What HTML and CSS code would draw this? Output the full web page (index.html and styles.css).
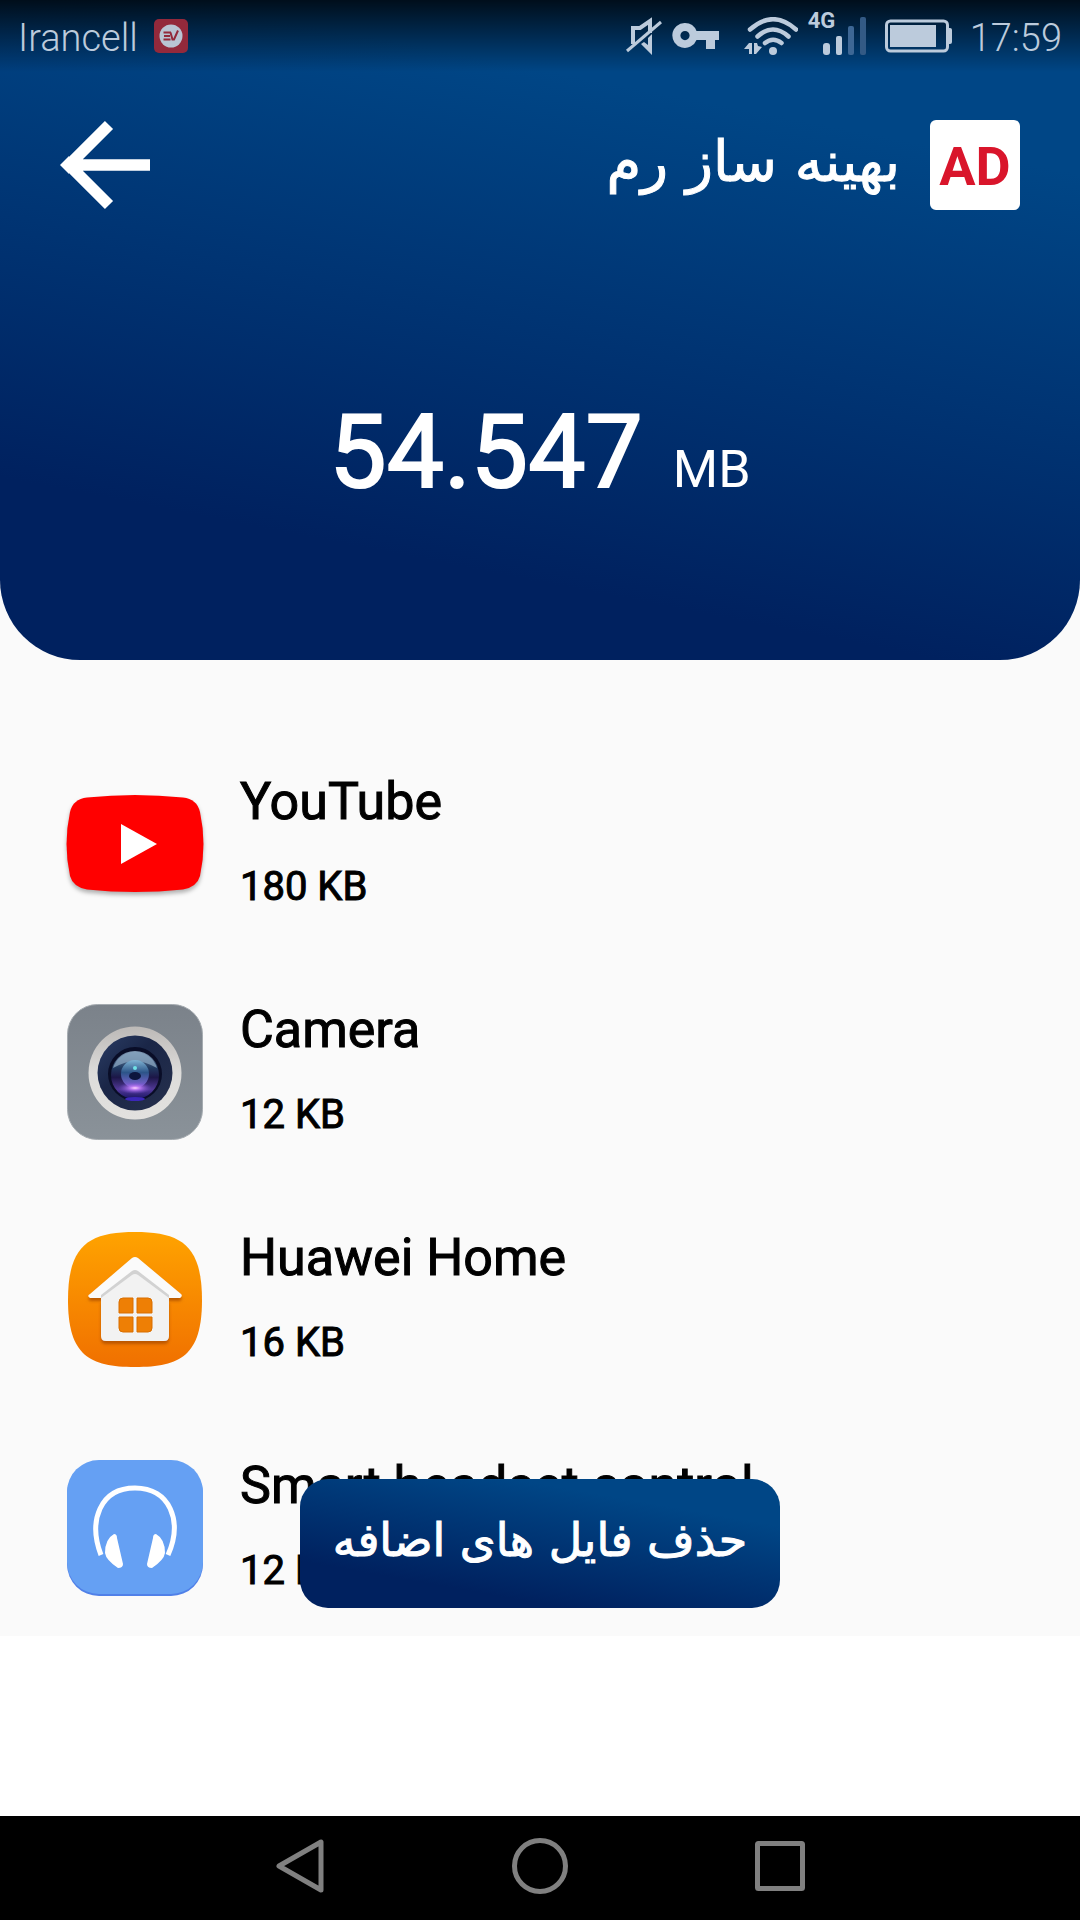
FILE: index.html
```html
<!DOCTYPE html>
<html lang="fa">
<head>
<meta charset="utf-8">
<meta name="viewport" content="width=device-width, initial-scale=1">
<title>بهینه ساز رم</title>
<link rel="stylesheet" href="styles.css">
</head>
<body>
<div class="screen">
  <header class="hero">
    <div class="status">
      <div class="status-side">
        <span class="carrier">Irancell</span>
        <svg class="vpn-badge" width="34" height="34" viewBox="0 0 34 34" aria-hidden="true">
          <rect width="34" height="34" rx="5" fill="#93293b"/>
          <circle cx="17" cy="17" r="11.500" fill="#b9c4d3"/>
          <path d="M9.500 13.500H17M10 17h6M9.500 20.500h7M16.500 13.500l2 7h1.500l4-9" fill="none" stroke="#93293b" stroke-width="2"/>
        </svg>
      </div>
      <div class="status-side">
        <svg width="36" height="38" viewBox="0 0 36 38" aria-hidden="true" fill="none" stroke="#bccbdc" stroke-width="4">
          <path d="M7 27V11h7L24 4v12"/>
          <path d="M1 34L35 5" stroke-width="3"/>
          <path d="M15 27l11 11V17l-4 4v7l-4-3z" fill="#bccbdc" stroke="none"/>
        </svg>
        <svg class="key" width="48" height="26" viewBox="0 0 48 26" aria-hidden="true" fill="#bccbdc">
          <path fill-rule="evenodd" d="M13 0a12.500 12.500 0 1 0 11.500 17H34v9h9v-9h4V8H24.500A12.500 12.500 0 0 0 13 0zm0 8a4.600 4.600 0 1 1 0 9.200A4.600 4.600 0 0 1 13 8z"/>
        </svg>
        <svg class="wifi" width="54" height="38" viewBox="0 0 54 38" aria-hidden="true" fill="none" stroke="#bccbdc" stroke-width="4.500" stroke-linecap="round">
          <path d="M6 12.500Q29-8 52 12.500M13.500 19.500Q29 5.500 44.500 19.500M21 26Q29 19.500 37.500 26"/>
          <circle cx="29" cy="34" r="4" fill="#bccbdc" stroke="none"/>
          <path d="M0 32l5-6h3v11H5v-5zM10 26v11h2l6-7-4-1-1-3z" fill="#bccbdc" stroke="none"/>
        </svg>
        <div class="signal">
          <span class="network">4G</span>
          <svg width="44" height="38" viewBox="0 0 44 38" aria-hidden="true" fill="#bccbdc">
            <rect x="0" y="26" width="7" height="12" rx="3"/>
            <rect x="13" y="19" width="6" height="19" rx="2"/>
            <rect x="25" y="9" width="6" height="29" rx="2" fill="#3d6795"/>
            <rect x="37" y="0" width="6" height="38" rx="2" fill="#335a85"/>
          </svg>
        </div>
        <svg class="battery" width="67" height="34" viewBox="0 0 67 34" aria-hidden="true">
          <rect x="1.500" y="2" width="61" height="30" rx="4" fill="none" stroke="#bccbdc" stroke-width="3"/>
          <rect x="5" y="6" width="46" height="22" fill="#bccbdc"/>
          <path d="M63 9h2q2 0 2 2v12q0 2-2 2h-2z" fill="#bccbdc"/>
        </svg>
        <time class="clock">17:59</time>
      </div>
    </div>

    <div class="toolbar">
      <button class="icon-button" type="button" aria-label="بازگشت">
        <svg width="90" height="90" viewBox="0 0 90 90" aria-hidden="true" fill="none" stroke="#fff" stroke-width="11.500">
          <path d="M90 45H12M49 5L9 45l40 40" />
          <path d="M0 45l9-9v18z" fill="#fff" stroke="none"/>
        </svg>
      </button>
      <div class="heading">
        <h1 class="title" dir="rtl">بهینه ساز رم</h1>
        <a class="ad" href="#">AD</a>
      </div>
    </div>

    <p class="total"><span class="total-value">54.547</span><span class="total-unit">MB</span></p>
  </header>

  <main class="content">
    <ul class="apps">
      <li class="app">
        <svg class="app-icon youtube" width="150" height="150" viewBox="0 0 150 150" aria-hidden="true">
          <path d="M27 28.500Q75 23.500 123 28.500Q137 30 140 43Q147 75 140 107Q137 118 123 120.500Q75 125.500 27 120.500Q13 118 10 107Q3 75 10 43Q13 30 27 28.500z" fill="#f00"/>
          <path d="M61 55l36 20-36 20z" fill="#fff"/>
        </svg>
        <div class="app-text"><h2 class="app-name">YouTube</h2><p class="app-size">180 KB</p></div>
      </li>
      <li class="app">
        <svg class="app-icon" width="150" height="150" viewBox="0 0 150 150" aria-hidden="true">
          <defs>
            <linearGradient id="body" x2="0" y2="1"><stop stop-color="#7b828a"/><stop offset="1" stop-color="#8a9299"/></linearGradient>
            <linearGradient id="ring" x2="0" y2="1"><stop stop-color="#bcb9b7"/><stop offset=".5" stop-color="#dddcda"/><stop offset="1" stop-color="#e2e1df"/></linearGradient>
            <linearGradient id="navy" x2="1" y2="1"><stop stop-color="#2b3d66"/><stop offset=".4" stop-color="#1a2647"/><stop offset="1" stop-color="#26304d"/></linearGradient>
            <linearGradient id="lens" x2="0" y2="1"><stop stop-color="#9db9d3"/><stop offset=".35" stop-color="#26456f"/><stop offset=".55" stop-color="#211950"/><stop offset=".8" stop-color="#6444b4"/><stop offset="1" stop-color="#1c1672"/></linearGradient>
            <linearGradient id="core" x2="0" y2="1"><stop stop-color="#7fb4d4"/><stop offset=".45" stop-color="#2c5488"/><stop offset="1" stop-color="#8a63dc"/></linearGradient>
            <radialGradient id="glow"><stop stop-color="#ffd4ff"/><stop offset=".3" stop-color="#b778ef"/><stop offset="1" stop-color="#6b47c8" stop-opacity="0"/></radialGradient>
          </defs>
          <rect x="7.500" y="7.500" width="135" height="135" rx="30" fill="url(#body)" stroke="#a5abb0"/>
          <circle cx="75" cy="76" r="46.500" fill="url(#ring)"/>
          <circle cx="75" cy="76" r="37.500" fill="url(#navy)"/>
          <circle cx="75" cy="77" r="27" fill="#090d27"/>
          <circle cx="75" cy="78" r="24" fill="url(#lens)" opacity=".8"/>
          <path d="M53 71a23 23 0 0 1 44 0Q84 64 75 64T53 71z" fill="#86a3be" opacity=".8"/>
          <circle cx="75" cy="77" r="14" fill="url(#core)"/>
          <ellipse cx="75" cy="79" rx="6" ry="4" fill="#0d153e"/>
          <ellipse cx="75" cy="91" rx="17" ry="6" fill="url(#glow)"/>
          <ellipse cx="75" cy="102" rx="10" ry="2" fill="#3b27b8"/>
          <circle cx="75" cy="71" r="2" fill="#70e2e6"/>
        </svg>
        <div class="app-text"><h2 class="app-name">Camera</h2><p class="app-size">12 KB</p></div>
      </li>
      <li class="app">
        <svg class="app-icon" width="150" height="150" viewBox="0 0 150 150" aria-hidden="true">
          <defs>
            <linearGradient id="orange" x2="0" y2="1"><stop stop-color="#ffa300"/><stop offset="1" stop-color="#f07000"/></linearGradient>
            <filter id="drop" x="-20%" y="-20%" width="140%" height="140%"><feDropShadow dx="0" dy="3" stdDeviation="1.500" flood-color="#a84800" flood-opacity=".75"/></filter>
          </defs>
          <path d="M75 7C121 7 142 20 142 75S121 142 75 142 8 130 8 75 29 7 75 7z" fill="url(#orange)"/>
          <path d="M41 75h68v36q0 5-5 5H46q-5 0-5-5z" fill="#f2f2f2" filter="url(#drop)"/>
          <path d="M29 72q-2-1 1-3l42-36q3-2 6 0l43 36q2 2-1 4H30z" fill="#fafafa" filter="url(#drop)"/>
          <path d="M41 76v-6l31-24q3-2 6 0l31 24v6z" fill="#d2d2d2"/>
          <path d="M41 80v-7l31-23q3-2 6 0l31 23v7z" fill="#f2f2f2"/>
          <path d="M73 73v15H59v-11q0-4 4-4zM77 73h11q4 0 4 4v11H77zM59 92h14v15H63q-4 0-4-4zM77 92h15v11q0 4-4 4H77z" fill="#ee7f05" stroke="#d96f00"/>
        </svg>
        <div class="app-text"><h2 class="app-name">Huawei Home</h2><p class="app-size">16 KB</p></div>
      </li>
      <li class="app">
        <svg class="app-icon" width="150" height="150" viewBox="0 0 150 150" aria-hidden="true">
          <rect x="7" y="9" width="136" height="134" rx="32" fill="#5080e8"/>
          <rect x="7" y="7" width="136" height="134" rx="32" fill="#65a0f3"/>
          <path d="M41 102C28 68 40 35 75 35s48 33 33 67" fill="none" stroke="#fff" stroke-width="5"/>
          <path d="M54 81q3 0 3 4l6 26q0 4-5 4Q46 107 45 100 45 86 54 81zM96 81q-3 0-3 4l-6 26q0 4 5 4 12-8 13-15Q105 86 96 81z" fill="#fff"/>
        </svg>
        <div class="app-text"><h2 class="app-name">Smart headset control</h2><p class="app-size">12 KB</p></div>
      </li>
    </ul>
    <button class="clean" type="button" dir="rtl">حذف فایل های اضافه</button>
  </main>

  <nav class="navbar">
    <button class="nav-button" type="button" aria-label="Back">
      <svg width="56" height="56" viewBox="0 0 56 56" aria-hidden="true"><path d="M49 4v48L7 28z" /></svg>
    </button>
    <button class="nav-button" type="button" aria-label="Home">
      <svg width="56" height="56" viewBox="0 0 56 56" aria-hidden="true"><circle cx="28" cy="28" r="25.500"/></svg>
    </button>
    <button class="nav-button" type="button" aria-label="Recent apps">
      <svg width="56" height="56" viewBox="0 0 56 56" aria-hidden="true"><rect x="5.500" y="5.500" width="45" height="45" rx="1"/></svg>
    </button>
  </nav>
</div>
</body>
</html>
```
FILE: styles.css
```css
* {
  box-sizing: border-box;
  margin: 0;
  padding: 0;
}

body {
  background: #fff;
  color: #000;
  font-family: Roboto, "DejaVu Sans", sans-serif;
}

button {
  border: 0;
  background: none;
  color: inherit;
  font: inherit;
  cursor: pointer;
}

svg {
  display: block;
  flex: none;
}

.screen {
  display: flex;
  flex-direction: column;
  min-height: 100vh;
  background: linear-gradient(#fafafa, #fafafa) top / 100% 800px no-repeat;
}

.hero {
  border-radius: 0 0 80px 80px;
  background: linear-gradient(191deg, #004686 20%, #00215f 79%);
  color: #fff;
  padding-bottom: 148px;
}

.status {
  display: flex;
  justify-content: space-between;
  height: 72px;
  padding: 0 18px;
  background: linear-gradient(rgba(0, 0, 0, 0.8), transparent);
  color: #bccbdc;
}

.status-side {
  display: flex;
  align-items: center;
}

.carrier,
.clock {
  padding-top: 4px;
  font-size: 38px;
  font-weight: 300;
  line-height: 68px;
}

.vpn-badge {
  margin-left: 16px;
}

.key {
  margin-left: 10px;
}

.wifi {
  margin-left: 24px;
}

.signal {
  display: flex;
  position: relative;
  margin-left: 10px;
  padding-left: 15px;
}

.network {
  position: absolute;
  top: -8px;
  left: 0;
  font-size: 22px;
  font-weight: 700;
  line-height: 24px;
}

.battery {
  margin: 0 18px;
}

.toolbar {
  display: flex;
  align-items: center;
  justify-content: space-between;
  padding: 48px 60px 0;
}

.icon-button {
  width: 90px;
  height: 90px;
}

.heading {
  display: flex;
  align-items: center;
  gap: 30px;
  height: 90px;
}

.title {
  padding-bottom: 6px;
  font-family: "DejaVu Sans", sans-serif;
  font-size: 56px;
  font-weight: 400;
  line-height: 84px;
  -webkit-text-stroke: 1px currentColor;
}

.ad {
  width: 90px;
  height: 90px;
  border-radius: 6px;
  background: #fff;
  color: #d9152b;
  font-size: 54px;
  font-weight: 700;
  line-height: 94px;
  text-align: center;
  text-decoration: none;
}

.total {
  display: flex;
  align-items: baseline;
  justify-content: center;
  gap: 30px;
  padding-top: 182px;
  line-height: 120px;
}

.total-value {
  font-size: 102px;
  -webkit-text-stroke: 2px currentColor;
}

.total-unit {
  font-size: 52px;
  line-height: 60px;
}

.content {
  position: relative;
  flex: 1;
  background: #fafafa;
}

.apps {
  display: flex;
  flex-direction: column;
  gap: 78px;
  padding: 109px 60px 33px;
  list-style: none;
}

.app {
  display: flex;
  gap: 30px;
}

.youtube {
  filter: drop-shadow(0 3px 2px rgba(0, 0, 0, 0.3));
}

.app-text {
  display: flex;
  flex-direction: column;
  gap: 28px;
}

.app-name {
  font-size: 52px;
  font-weight: 400;
  line-height: 66px;
  -webkit-text-stroke: 1px currentColor;
}

.app-size {
  font-size: 40px;
  line-height: 48px;
  -webkit-text-stroke: 1px currentColor;
}

.clean {
  position: absolute;
  bottom: 28px;
  left: 50%;
  width: 480px;
  height: 129px;
  margin-left: -240px;
  padding-bottom: 8px;
  border-radius: 28px;
  background: linear-gradient(190deg, #004686 22%, #00215f 78%);
  color: #fff;
  font-family: "DejaVu Sans", sans-serif;
  font-size: 46px;
  -webkit-text-stroke: 1px currentColor;
}

.navbar {
  display: flex;
  align-items: center;
  justify-content: center;
  gap: 184px;
  height: 104px;
  margin-top: 180px;
  padding-bottom: 4px;
  background: #000;
}

.nav-button {
  width: 56px;
  height: 56px;
}

.nav-button svg {
  fill: none;
  stroke: #808080;
  stroke-width: 5px;
  stroke-linejoin: round;
}
```
